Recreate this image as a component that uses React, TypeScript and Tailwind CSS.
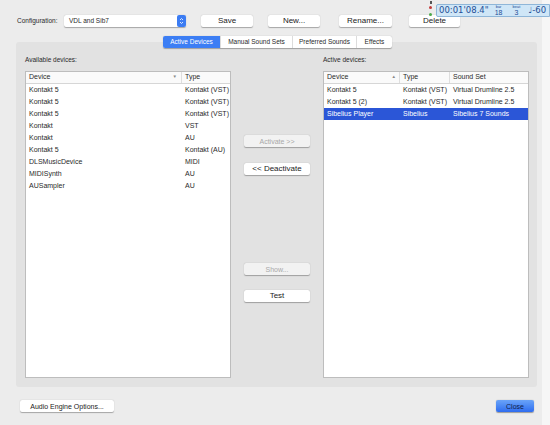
import React from "react";

type Row = { device: string; type: string; set?: string; selected?: boolean };

const available: Row[] = [
  { device: "Kontakt 5", type: "Kontakt (VST)" },
  { device: "Kontakt 5", type: "Kontakt (VST)" },
  { device: "Kontakt 5", type: "Kontakt (VST)" },
  { device: "Kontakt", type: "VST" },
  { device: "Kontakt", type: "AU" },
  { device: "Kontakt 5", type: "Kontakt (AU)" },
  { device: "DLSMusicDevice", type: "MIDI" },
  { device: "MIDISynth", type: "AU" },
  { device: "AUSampler", type: "AU" },
];

const active: Row[] = [
  { device: "Kontakt 5", type: "Kontakt (VST)", set: "Virtual Drumline 2.5" },
  { device: "Kontakt 5 (2)", type: "Kontakt (VST)", set: "Virtual Drumline 2.5" },
  { device: "Sibelius Player", type: "Sibelius", set: "Sibelius 7 Sounds", selected: true },
];

function Btn({
  children,
  className = "",
  disabled = false,
}: {
  children: React.ReactNode;
  className?: string;
  disabled?: boolean;
}) {
  return (
    <button
      className={
        "h-[12px] rounded-[2px] flex items-center justify-center leading-none shadow-[0_0.5px_1px_rgba(0,0,0,0.3)] " +
        (disabled ? "bg-[#f2f2f2] text-[#a8a8a8] " : "bg-white text-[#222] ") +
        className
      }
    >
      {children}
    </button>
  );
}

export default function App() {
  const tabs = ["Active Devices", "Manual Sound Sets", "Preferred Sounds", "Effects"];

  return (
    <div
      className="relative w-[550px] h-[425px] flex bg-[#f6f6f6] overflow-hidden"
      style={{ fontFamily: '"Liberation Sans", Arial, sans-serif' }}
    >
      <div className="w-[542px] h-full bg-[#ececec] flex flex-col">
        {/* Configuration row */}
        <div className="flex items-center pt-[14px] pl-[17px] h-[27px]">
          <span className="text-[6.5px] text-[#2a2a2a] w-[47px]">Configuration:</span>
          <div className="w-[122px] h-[12px] bg-white rounded-[2px] shadow-[0_0.5px_1px_rgba(0,0,0,0.3)] flex items-center justify-between pl-[5px]">
            <span className="text-[6.5px] text-[#2a2a2a]">VDL and Sib7</span>
            <div className="w-[9px] h-[12px] rounded-[2px] bg-[#3b7cf3] flex flex-col items-center justify-center">
              <svg width="5" height="8" viewBox="0 0 5 8">
                <path d="M1 3 L2.5 1.5 L4 3" stroke="white" strokeWidth="0.8" fill="none" />
                <path d="M1 5 L2.5 6.5 L4 5" stroke="white" strokeWidth="0.8" fill="none" />
              </svg>
            </div>
          </div>
          <Btn className="w-[52px] ml-[15px] text-[8px]">Save</Btn>
          <Btn className="w-[52px] ml-[15px] text-[8px]">New...</Btn>
          <Btn className="w-[53px] ml-[19px] text-[8px]">Rename...</Btn>
          <Btn className="w-[51px] ml-[17px] text-[8px]">Delete</Btn>
        </div>

        {/* Tabs */}
        <div className="relative z-10 flex justify-center mt-[9px] pl-[13px] h-[12px]">
          <div className="flex h-[12px] rounded-[2px] shadow-[0_0.5px_1px_rgba(0,0,0,0.3)] bg-white text-[6.5px]">
            {tabs.map((t, i) => (
              <div
                key={t}
                className={
                  "h-full flex items-center justify-center " +
                  (i === 0
                    ? "w-[57px] bg-[#3c7ef4] text-white rounded-l-[2px]"
                    : "text-[#2a2a2a] border-l border-[#dcdcdc] " +
                      (i === 1 ? "w-[72px]" : i === 2 ? "w-[64px]" : "w-[36px]"))
                }
              >
                {t}
              </div>
            ))}
          </div>
        </div>

        {/* Panel */}
        <div className="ml-[16px] w-[521px] h-[345px] -mt-[6px] bg-[#e2e2e2] rounded-[3px] flex pt-[13px] pl-[9px] pr-[8px] pb-[9px]">
          {/* Available list */}
          <div className="flex flex-col w-[206px]">
            <div className="h-[10px] text-[6.5px] text-[#2a2a2a] leading-[10px]">Available devices:</div>
            <div className="mt-[6px] flex-1 bg-white border border-[#bdbdbd] text-[7px] text-[#2a2a2a]">
              <div className="flex h-[12px] items-center border-b border-[#d6d6d6] bg-[#fafafa]">
                <div className="w-[156px] pl-[3px] flex justify-between items-center pr-[4px] border-r border-[#dedede]">
                  <span>Device</span>
                  <span className="text-[4.5px] text-[#888]">▼</span>
                </div>
                <div className="pl-[3px]">Type</div>
              </div>
              {available.map((r, i) => (
                <div key={i} className="flex h-[12px] items-center">
                  <div className="w-[159px] pl-[3px]">{r.device}</div>
                  <div>{r.type}</div>
                </div>
              ))}
            </div>
          </div>

          {/* Middle buttons */}
          <div className="w-[92px] flex flex-col items-center pt-[80px] text-[8px]">
            <Btn disabled className="w-[66px] text-[7px]">Activate &gt;&gt;</Btn>
            <Btn className="w-[66px] mt-[16px]">&lt;&lt; Deactivate</Btn>
            <Btn disabled className="w-[66px] mt-[88px] text-[7px]">Show...</Btn>
            <Btn className="w-[66px] mt-[15px]">Test</Btn>
          </div>

          {/* Active list */}
          <div className="flex flex-col w-[206px]">
            <div className="h-[10px] text-[6.5px] text-[#2a2a2a] leading-[10px]">Active devices:</div>
            <div className="mt-[6px] flex-1 bg-white border border-[#bdbdbd] text-[7px] text-[#2a2a2a]">
              <div className="flex h-[12px] items-center border-b border-[#d6d6d6] bg-[#fafafa]">
                <div className="w-[76px] pl-[3px] flex justify-between items-center pr-[3px] border-r border-[#dedede]">
                  <span>Device</span>
                  <span className="text-[4.5px] text-[#888]">▲</span>
                </div>
                <div className="w-[50px] pl-[3px] border-r border-[#dedede]">Type</div>
                <div className="pl-[3px]">Sound Set</div>
              </div>
              {active.map((r, i) => (
                <div
                  key={i}
                  className={
                    "flex h-[12px] items-center " +
                    (r.selected ? "bg-[#2b56d7] text-white" : "")
                  }
                >
                  <div className="w-[79px] pl-[3px]">{r.device}</div>
                  <div className="w-[50px]">{r.type}</div>
                  <div>{r.set}</div>
                </div>
              ))}
            </div>
          </div>
        </div>

        {/* Bottom row */}
        <div className="flex items-center justify-between pl-[20px] pr-[8px] mt-[13px]">
          <Btn className="w-[94px] text-[7px]">Audio Engine Options...</Btn>
          <button className="w-[38px] h-[12px] rounded-[2px] bg-gradient-to-b from-[#6aa3f8] to-[#2f6cef] text-[7px] text-[#10204a] leading-none shadow-[0_0.5px_1px_rgba(0,0,0,0.35)]">
            Close
          </button>
        </div>
      </div>

      {/* Floating transport readout */}
      <div className="absolute left-[425px] top-0 w-[125px] h-[19px] flex items-start">
        <div className="w-[11px] h-[19px] flex flex-col items-center pt-[1px]">
          <div className="w-[2px] h-[3px] bg-[#555]" />
          <div className="w-[3px] h-[3px] rounded-full bg-[#c23a3a] mt-[2px]" />
          <div className="w-[3px] h-[3px] rounded-full bg-[#4aa94a] mt-[4px]" />
        </div>
        <div className="mt-[4px] h-[13px] flex-1 bg-[#cfe6f7] border border-[#8fb6d8] rounded-l-[2px] flex items-center pl-[2px] text-[#1f4f96] leading-none">
          <span className="text-[8.5px]" style={{ fontFamily: '"DejaVu Sans", sans-serif' }}>
            00:01'08.4"
          </span>
          <div className="ml-[6px] flex flex-col items-center text-[4px]">
            <span>bar</span>
            <span className="text-[7px]">18</span>
          </div>
          <div className="ml-[10px] flex flex-col items-center text-[4px]">
            <span>beat</span>
            <span className="text-[7px]">3</span>
          </div>
          <span className="ml-[8px] text-[8.5px]" style={{ fontFamily: '"DejaVu Sans", sans-serif' }}>
            ♩-60
          </span>
        </div>
      </div>
    </div>
  );
}
